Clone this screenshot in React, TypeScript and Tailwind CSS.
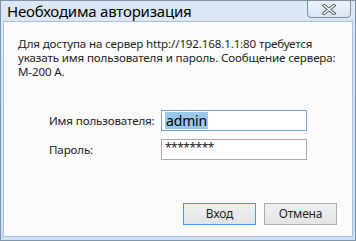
import { useState } from 'react'

const FONT = { fontFamily: '"Noto Sans", "Liberation Sans", sans-serif' }

function CloseGlyph() {
  return (
    <svg width="14" height="11" viewBox="0 0 14 11">
      <path d="M2 1.5 L12 9.5 M12 1.5 L2 9.5" stroke="#5b6470" strokeWidth="3.4" strokeLinecap="square" />
      <path d="M2 1.5 L12 9.5 M12 1.5 L2 9.5" stroke="#fdfdfd" strokeWidth="1.4" strokeLinecap="square" />
    </svg>
  )
}

export default function App() {
  const [user, setUser] = useState('admin')
  const [pass, setPass] = useState('********')

  return (
    <div
      style={FONT}
      className="flex h-[241px] w-[356px] flex-col border border-[#7f93ad] bg-gradient-to-b from-[#dce8f6] to-[#cfdff2] px-[2px] pb-[3px] text-[#1e1e1e]"
    >
      {/* Title bar */}
      <div className="flex h-[20px] items-start justify-between">
        <span className="mt-[1px] pl-[4px] text-[15px] leading-[18px] tracking-[-0.2px] text-black">
          Необходима авторизация
        </span>
        <button className="mr-[2px] mt-[-1px] flex h-[18px] w-[44px] items-center justify-center rounded-b-[4px] border border-[#7e8fa6] bg-gradient-to-b from-[#eef3fa] to-[#d9e4f1]">
          <CloseGlyph />
        </button>
      </div>

      {/* Client area */}
      <div className="flex flex-1 flex-col border border-[#a9bfdc] bg-[#fbfbfb] pl-[14px] pr-[10px] pt-[15px] tracking-[-0.15px]">
        <p className="whitespace-nowrap text-[11.6px] leading-[14px]">
          Для доступа на сервер http://192.168.1.1:80 требуется
          <br />
          указать имя пользователя и пароль. Сообщение сервера:
          <br />
          M-200 A.
        </p>

        <div className="mt-[31px] grid grid-cols-[112px_146px] items-center gap-y-[8px] pl-[31px] text-[11.6px]">
          <label htmlFor="user" className="whitespace-nowrap">Имя пользователя:</label>
          <div className="flex h-[21px] items-center border border-[#7aa3d4] bg-white px-[3px]">
            <input
              id="user"
              value={user}
              onChange={(e) => setUser(e.target.value)}
              className="hidden"
            />
            <span className="bg-[#99c9ef] px-[1px] text-[14px] leading-[17px] text-black">{user}</span>
          </div>
          <label htmlFor="pass">Пароль:</label>
          <div className="flex h-[21px] items-start border border-[#ababab] bg-white px-[3px]">
            <input
              id="pass"
              value={pass}
              onChange={(e) => setPass(e.target.value)}
              className="w-full bg-transparent pt-[1px] text-[12px] leading-[14px] tracking-[-0.5px] outline-none"
            />
          </div>
        </div>

        <div className="mt-auto mb-[11px] flex justify-end gap-[8px] pr-[5px]">
          <button className="h-[22px] w-[73px] border border-[#3c9cfb] bg-gradient-to-b from-[#efefef] to-[#e4e4e4] text-[12px]">
            Вход
          </button>
          <button className="h-[22px] w-[73px] border border-[#acacac] bg-gradient-to-b from-[#efefef] to-[#e4e4e4] text-[12px]">
            Отмена
          </button>
        </div>
      </div>
    </div>
  )
}
